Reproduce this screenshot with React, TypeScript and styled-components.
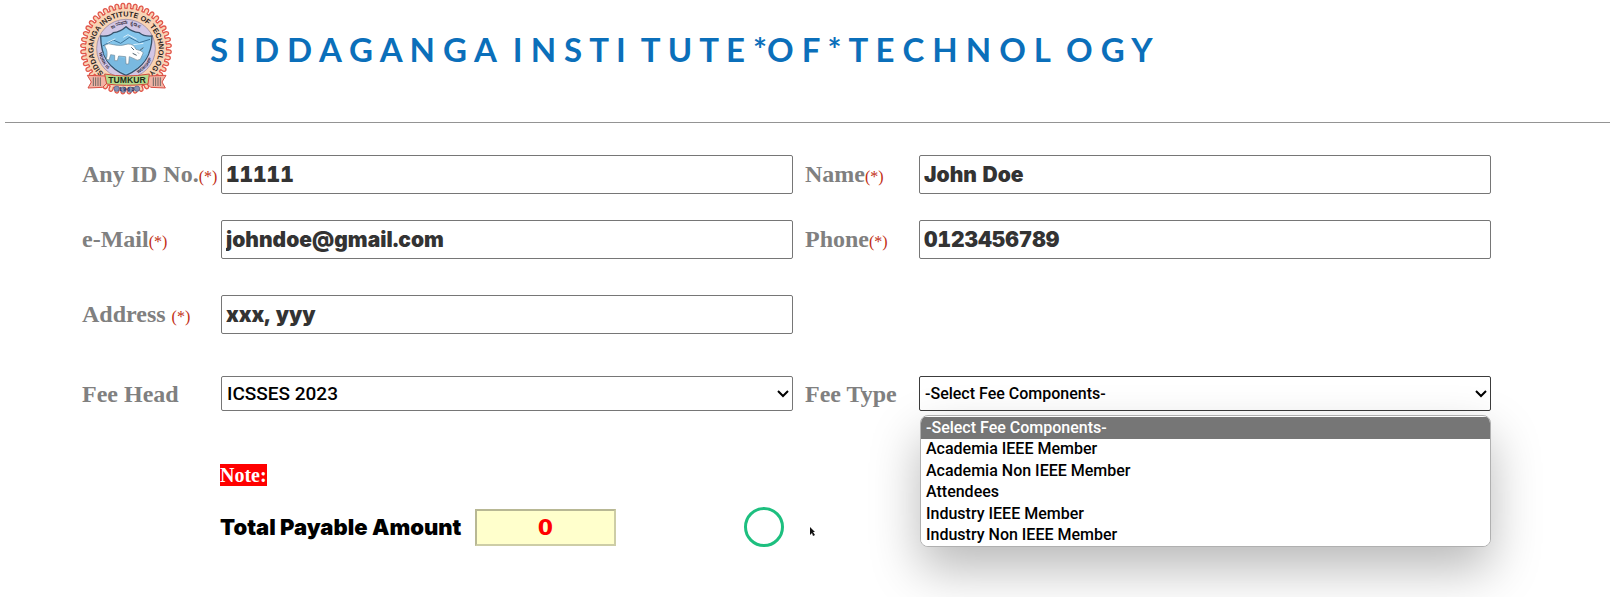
import React from "react";
import styled, { createGlobalStyle } from "styled-components";

const GlobalStyle = createGlobalStyle`
  * { box-sizing: border-box; }
  body { margin: 0; background: #fff; overflow: hidden; }
`;

const serif = `"Liberation Serif", "Times New Roman", serif`;
const heavy = `Inter, "Liberation Sans", sans-serif`;
const gothic = `Roboto, "Liberation Sans", sans-serif`;

const Header = styled.header`
  display: flex;
  align-items: flex-start;
  gap: 36px;
  margin-left: 5px;
  padding: 2px 0 0 74px;
  height: 123px;
  border-bottom: 1px solid #949494;
`;

const Crest = styled.svg`
  flex: none;
  width: 95px;
  height: 95px;
`;

const Title = styled.h1`
  display: flex;
  gap: 16px;
  margin: 0;
  padding-top: 25px;
  color: #0b6fba;
  font: 700 33px/44px Lato, "Liberation Sans", sans-serif;
  white-space: pre;
`;

const Form = styled.form`
  padding: 32px 119px 50px 82px;
`;

const Row = styled.div<{ $space?: number }>`
  display: grid;
  grid-template-columns: 139px minmax(0, 1fr) 126px minmax(0, 1fr);
  align-items: center;
  margin-top: ${(p) => p.$space ?? 0}px;
`;

const Label = styled.label<{ $indent?: boolean }>`
  padding-left: ${(p) => (p.$indent ? 12 : 0)}px;
  color: #808080;
  font: 700 24px/28px ${serif};
  white-space: nowrap;
`;

const FieldLabel = styled(Label)`
  padding-top: 2px;
`;

const Required = styled.span`
  color: #c22d12;
  font-size: 16px;
  font-weight: 400;
`;

const TextBox = styled.input`
  width: 100%;
  height: 39px;
  padding: 0 4px;
  border: 1px solid #767676;
  border-radius: 2px;
  background: #fff;
  color: #333;
  font: 900 21px/28px ${heavy};
  font-variant-numeric: tabular-nums;
`;

const SelectCell = styled.div`
  position: relative;
`;

const Select = styled.select<{ $size: number; $open?: boolean }>`
  display: block;
  appearance: none;
  width: 100%;
  height: 35px;
  padding: 0 5px;
  border: 1px solid ${(p) => (p.$open ? "#3c3c3c" : "#767676")};
  border-radius: 2px;
  background: #fff;
  color: #000;
  font: 500 ${(p) => p.$size}px/24px ${gothic};
`;

const Chevron = styled.svg`
  position: absolute;
  top: 13px;
  right: 4px;
  width: 12px;
  height: 10px;
  pointer-events: none;
`;

const Menu = styled.ul`
  position: absolute;
  top: 39px;
  left: 1px;
  right: 0;
  display: grid;
  grid-template-rows: repeat(6, 1fr);
  height: 132px;
  margin: 0;
  padding: 1px 0 0;
  overflow: hidden;
  list-style: none;
  border: 1px solid #b0b0b0;
  border-radius: 8px;
  background: #fff;
  box-shadow: 0 22px 50px rgba(0, 0, 0, 0.28);
`;

const Option = styled.li<{ $active?: boolean }>`
  display: flex;
  align-items: center;
  padding-left: 5px;
  background: ${(p) => (p.$active ? "#767676" : "#fff")};
  color: ${(p) => (p.$active ? "#fff" : "#000")};
  font: 500 16px/20px ${gothic};
`;

const Summary = styled.div`
  padding: 53px 0 0 138px;
`;

const Note = styled.strong`
  display: inline-block;
  background: #f00;
  color: #fff;
  font: 700 20px/22px ${serif};
`;

const TotalRow = styled.div`
  display: flex;
  align-items: center;
  height: 40px;
  margin-top: 21px;
`;

const TotalLabel = styled.label`
  width: 255px;
  color: #000;
  font: 900 22px/28px ${heavy};
  white-space: nowrap;
`;

const Total = styled.input`
  width: 141px;
  height: 37px;
  border: 2px solid;
  border-color: #b8b894 #cdcda6 #cdcda6 #b8b894;
  background: #ffffcc;
  color: #f00;
  text-align: center;
  font: 700 22px/28px "DejaVu Sans", sans-serif;
`;

const Ring = styled.span`
  width: 40px;
  height: 40px;
  margin-left: 128px;
  border: 3px solid #1dbf7f;
  border-radius: 50%;
`;

const Pointer = styled.svg`
  width: 7px;
  height: 11px;
  margin-left: 25px;
  margin-top: 8px;
`;

const CX = 198;
const CY = 146;
const TEETH = 44;

function gearPath() {
  let d = "";
  for (let i = 0; i < TEETH; i++) {
    const at = (r: number, f: number) => {
      const a = ((i + f) / TEETH) * Math.PI * 2;
      return `${(CX + r * Math.sin(a)).toFixed(1)} ${(CY - r * Math.cos(a)).toFixed(1)}`;
    };
    d += `${i ? "L" : "M"}${at(121, 0)}L${at(122, 0.2)}Q${at(136, 0.1)} ${at(136, 0.5)}Q${at(136, 0.9)} ${at(122, 0.8)}`;
  }
  return d + "Z";
}

function CollegeCrest() {
  return (
    <Crest viewBox="57 6 285 285" role="img" aria-label="Siddaganga Institute of Technology crest">
      <defs>
        <path id="outer" d="M133 221A98 98 0 1 1 263 221" />
        <path id="motto" d="M134 110A74 74 0 0 1 262 110" />
        <path id="left" d="M117 158A82 82 0 0 0 162 220" />
        <path id="right" d="M234 220A82 82 0 0 0 279 158" />
      </defs>
      <path d={gearPath()} fill="#f8d3b4" stroke="#e2574c" strokeWidth="4" />
      <circle cx={CX} cy={CY} r="88" fill="#d3c7e5" stroke="#8f7f94" strokeWidth="2" />
      <text fontFamily="Liberation Sans, sans-serif" fontWeight="700" fontSize="22" fill="#2b2422" textAnchor="middle">
        <textPath href="#outer" startOffset="50%">SIDDAGANGA INSTITUTE OF TECHNOLOGY</textPath>
      </text>
      <text fontFamily="Noto Sans, sans-serif" fontWeight="600" fontSize="16" fill="#4b4458" textAnchor="middle">
        <textPath href="#motto" startOffset="50%">ಕಾಯಕವೇ ಕೈಲಾಸ</textPath>
      </text>
      <text fontFamily="Liberation Sans, sans-serif" fontWeight="700" fontSize="13" fill="#2d2940">
        <textPath href="#left">WORK IS</textPath>
      </text>
      <text fontFamily="Liberation Sans, sans-serif" fontWeight="700" fontSize="13" fill="#2d2940">
        <textPath href="#right">WORSHIP</textPath>
      </text>
      <path d="M122 108Q148 110 160 98Q180 96 198 80Q216 96 238 98Q252 110 276 108C276 170 248 205 198 226C148 205 122 170 122 108Z" fill="#83c4ea" stroke="#37526b" strokeWidth="4" />
      <path d="M128 138L160 120L182 130L208 112L238 128L270 118" fill="none" stroke="#3a7199" strokeWidth="3" />
      <path d="M142 128L166 116M190 112L204 104L230 118M220 134L250 130" fill="none" stroke="#d8eefa" strokeWidth="3" />
      <path d="M130 158Q160 170 198 176Q240 178 266 158Q256 184 234 202L198 220Q160 206 142 182Z" fill="#79b9e0" />
      <path d="M134 136Q144 128 160 134Q182 140 204 132Q222 132 228 148L242 152L250 158L241 178Q232 184 222 176L208 170L206 192L198 192L197 170L176 168L172 182L164 182L164 166L152 164L147 180L139 178Q145 155 136 142Z" fill="#fff" stroke="#6c8797" strokeWidth="2" />
      <path d="M222 150L214 142M240 151L250 143M218 160L230 166M234 158L236 160" stroke="#4c5d69" strokeWidth="3" fill="none" />
      <path d="M137 228L82 226L94 246L84 264L128 262L140 250ZM263 228L318 226L306 246L316 264L272 262L260 250Z" fill="#f2b3a4" stroke="#d94f45" strokeWidth="3" />
      <path d="M100 232V258M107 232V258M114 232V258M121 232V258M280 232V258M287 232V258M294 232V258M301 232V258" stroke="#6d6763" strokeWidth="3" />
      <path d="M134 222Q198 234 268 222L264 252Q198 260 140 252Z" fill="#b5d98b" stroke="#cf4a3c" strokeWidth="3" />
      <text x="201" y="249" textAnchor="middle" fontFamily="Liberation Sans, sans-serif" fontWeight="700" fontSize="26" fill="#1e2b18">TUMKUR</text>
      <g fill="#8592b3" stroke="#4b5b8a" strokeWidth="2">
        <circle cx="170" cy="266" r="8" />
        <circle cx="190" cy="269" r="8" />
        <circle cx="211" cy="269" r="8" />
        <circle cx="231" cy="266" r="8" />
      </g>
      <text x="200" y="273" textAnchor="middle" fontFamily="Liberation Sans, sans-serif" fontWeight="700" fontSize="15" fill="#1f2d5c">1 9 6 3</text>
    </Crest>
  );
}

function DropArrow() {
  return (
    <Chevron viewBox="0 0 12 10" aria-hidden="true">
      <path d="M1 2L6 7L11 2" fill="none" stroke="#000" strokeWidth="2" />
    </Chevron>
  );
}

const feeTypes = [
  "-Select Fee Components-",
  "Academia IEEE Member",
  "Academia Non IEEE Member",
  "Attendees",
  "Industry IEEE Member",
  "Industry Non IEEE Member",
];

interface FieldProps {
  id: string;
  label: string;
  value: string;
  type?: string;
  indent?: boolean;
}

function Field({ id, label, value, type = "text", indent }: FieldProps) {
  return (
    <>
      <FieldLabel htmlFor={id} $indent={indent}>
        {label}
        <Required>(*)</Required>
      </FieldLabel>
      <TextBox id={id} type={type} defaultValue={value} />
    </>
  );
}

export default function App() {
  return (
    <>
      <GlobalStyle />
      <Header>
        <CollegeCrest />
        <Title>
          <span>S I D D A G A N G A</span>
          <span>I N S T I  T U T E *O F * T E C H N O L  O G Y</span>
        </Title>
      </Header>
      <Form>
        <Row>
          <Field id="idno" label="Any ID No." value="11111" />
          <Field id="name" label="Name" value="John Doe" indent />
        </Row>
        <Row $space={26}>
          <Field id="email" label="e-Mail" value="johndoe@gmail.com" />
          <Field id="phone" label="Phone" type="tel" value="0123456789" indent />
        </Row>
        <Row $space={36}>
          <Field id="address" label="Address " value="xxx, yyy" />
        </Row>
        <Row $space={42}>
          <Label htmlFor="feehead">Fee Head</Label>
          <SelectCell>
            <Select id="feehead" $size={19}>
              <option>ICSSES 2023</option>
            </Select>
            <DropArrow />
          </SelectCell>
          <Label htmlFor="feetype" $indent>Fee Type</Label>
          <SelectCell>
            <Select id="feetype" $size={16} $open>
              {feeTypes.map((t) => (
                <option key={t}>{t}</option>
              ))}
            </Select>
            <DropArrow />
            <Menu>
              {feeTypes.map((t, i) => (
                <Option key={t} $active={i === 0}>{t}</Option>
              ))}
            </Menu>
          </SelectCell>
        </Row>
        <Summary>
          <Note>Note:</Note>
          <TotalRow>
            <TotalLabel htmlFor="total">Total Payable Amount</TotalLabel>
            <Total id="total" defaultValue="0" readOnly />
            <Ring />
            <Pointer viewBox="0 0 7 11" aria-hidden="true">
              <path d="M1 1V9L3 7L4 10L6 9L4 6H6Z" fill="#111" />
            </Pointer>
          </TotalRow>
        </Summary>
      </Form>
    </>
  );
}
